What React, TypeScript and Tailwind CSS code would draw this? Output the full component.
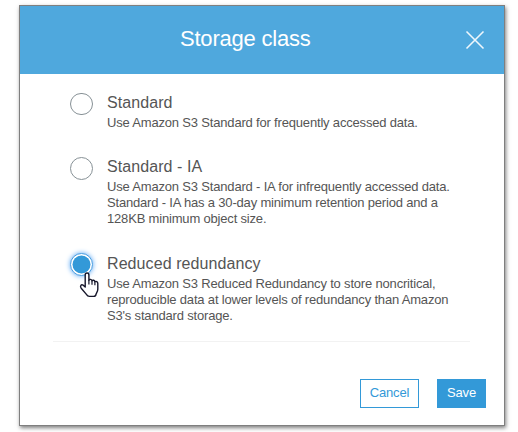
import React from 'react';

type Option = { title: string; lines: string[]; selected?: boolean; space: string; radio: string };

const options: Option[] = [
  {
    title: 'Standard',
    lines: ['Use Amazon S3 Standard for frequently accessed data.'],
    space: 'h-16',
    radio: 'mt-px h-[22px]',
  },
  {
    title: 'Standard - IA',
    lines: [
      'Use Amazon S3 Standard - IA for infrequently accessed data.',
      'Standard - IA has a 30-day minimum retention period and a',
      '128KB minimum object size.',
    ],
    space: 'h-[97px]',
    radio: 'mt-px h-[23px]',
  },
  {
    title: 'Reduced redundancy',
    lines: [
      'Use Amazon S3 Reduced Redundancy to store noncritical,',
      'reproducible data at lower levels of redundancy than Amazon',
      "S3's standard storage.",
    ],
    selected: true,
    space: 'h-[88px]',
    radio: 'h-[23px]',
  },
];

function HandCursor() {
  return (
    <svg className="absolute left-[9px] top-[19px]" width="21" height="26" viewBox="0 0 21 26">
      <path
        d="M6.2 15V3C6.2 .4 9.9 .4 9.9 3V8.2C10.6 6.9 12.7 7.1 13 8.8C13.8 7.7 15.7 8.2 15.9 9.8C17 8.9 18.8 9.7 18.8 11.4V17.2C18.8 19.8 17.2 20.8 17 22.4C16.8 23.8 15.9 24.4 14.6 24.4H10.4C8.8 24.4 8 23.4 7.2 22.1L2.2 16.2C.6 14.1 2.3 11.9 4.2 13.2Z"
        fill="#fff"
        stroke="#16162a"
        strokeWidth="1.4"
        strokeLinejoin="round"
      />
      <path d="M9.9 8V12.5M13 8.8V12.8M15.9 9.8V13.2" stroke="#16162a" strokeWidth="1.2" fill="none" />
    </svg>
  );
}

function Radio({ selected, size }: { selected?: boolean; size: string }) {
  return (
    <div className={`relative mr-[14px] w-[23px] shrink-0 ${size}`}>
      {selected ? (
        <div className="flex h-full w-full items-center justify-center rounded-full border border-[#4d9fe0] bg-white shadow-[0_0_5px_#5aa7f5]">
          <div className="h-[17px] w-[17px] shrink-0 rounded-full bg-[#3399d8] shadow-[0_0_0_0.5px_#3399d8]" />
        </div>
      ) : (
        <div className="h-full w-full rounded-full border border-[#879196]" />
      )}
      {selected && <HandCursor />}
    </div>
  );
}

export default function App() {
  return (
    <div className="h-[432px] w-[518px] overflow-hidden bg-white pl-[19px] pt-[5px] font-['Liberation_Sans',Arial,sans-serif] text-[#555]">
      <div className="flex h-[421px] w-[486px] flex-col border border-[#7f7f7f] bg-white shadow-[1px_2px_4px_rgba(0,0,0,0.5)]">
        <header className="flex h-[68px] shrink-0 items-center bg-[#4fa8dd] pl-[160px] pr-[19px] text-white">
          <h1 className="-mt-[3px] flex-1 whitespace-nowrap text-[22px] leading-[26px] tracking-[-0.21px]">Storage class</h1>
          <svg width="20" height="20" viewBox="0 0 20 20">
            <path d="M1.5 1.5L18.5 18.5M18.5 1.5L1.5 18.5" stroke="#fff" strokeOpacity="0.9" strokeWidth="1.6" />
          </svg>
        </header>
        <main className="ml-[33px] mr-[34px] border-b border-[#f2f2f2] pl-[17px] pt-[18px]">
          {options.map((o) => (
            <div key={o.title} className={`flex ${o.space}`}>
              <Radio selected={o.selected} size={o.radio} />
              <div className="whitespace-nowrap">
                <h2 className="mb-px text-[16px] leading-[22px] tracking-[0.08px]">{o.title}</h2>
                {o.lines.map((l) => (
                  <p key={l} className="text-[13px] leading-4 tracking-[-0.18px]">{l}</p>
                ))}
              </div>
            </div>
          ))}
        </main>
        <footer className="flex gap-[18px] pl-[340px] pt-[37px] text-[13px]">
          <button className="h-[29px] w-[59px] border border-[#3399d8] pb-[2px] tracking-[-0.2px] text-[#3399d8]">Cancel</button>
          <button className="h-[29px] w-[49px] bg-[#3399d8] pb-[2px] tracking-[-0.1px] text-white">Save</button>
        </footer>
      </div>
    </div>
  );
}
